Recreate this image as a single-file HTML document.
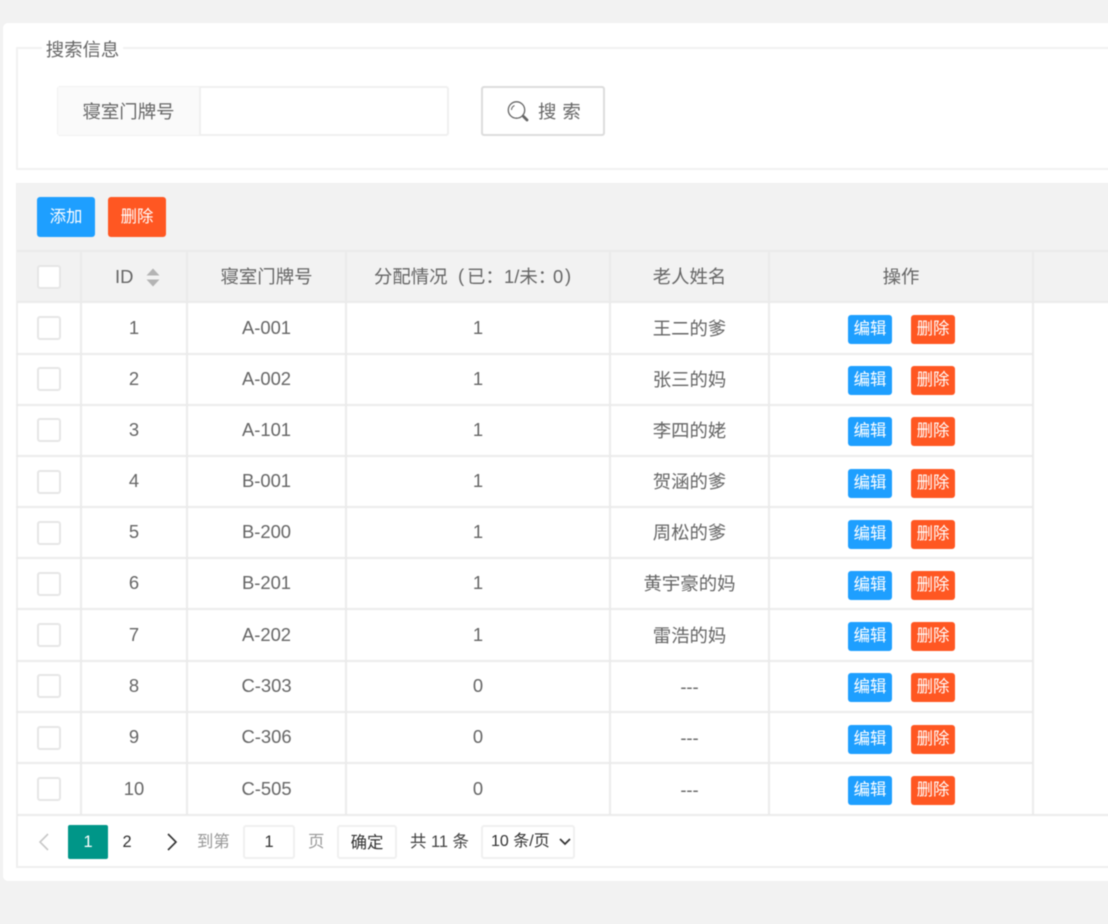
<!DOCTYPE html>
<html lang="zh"><head><meta charset="utf-8"><title>寝室管理</title>
<style>
*{box-sizing:border-box}
html,body{margin:0;padding:0}
body{width:1108px;height:924px;overflow:hidden;background:#f2f2f2;position:relative;font-family:"Liberation Sans","Noto Sans CJK SC",sans-serif;color:#666;font-size:18.4px}
div,span,a{position:absolute}
#wrap{left:0;top:0;width:1108px;height:924px;filter:blur(.5px)}
.t{white-space:nowrap;text-align:center;line-height:1}
.line{background:#ebebeb}
.cb{left:37px;width:24px;height:24px;background:#fff;border:2px solid #e6e6e6;border-radius:3px}
.btn{color:#fff;text-align:center;border-radius:3px;white-space:nowrap}
.b{background:#1e9fff}.r{background:#ff5722}
.main{width:58px;height:40px;top:197px;line-height:40px;font-size:16.4px}
.sm{width:44px;height:29px;line-height:29px;font-size:16.4px}
.row{left:16px;width:1092px;height:51px}
.c1{left:65px;width:106px}.c2{left:171px;width:159px}.c3{left:330px;width:264px}.c4{left:594px;width:159px;margin-top:1px}
.row .t{top:15.5px;height:20px;line-height:20px;font-size:18.4px}
.row .line.h{left:0;top:51px;width:1017px;height:2px}
.p{top:825px;height:34px;line-height:34px;font-size:16.4px;text-align:center;white-space:nowrap}
.box{background:#fff;border:2px solid #f0f0f0;border-radius:3px}
.h1{top:267px;height:20px;line-height:20px;white-space:nowrap}
</style></head>
<body><div id="wrap">
<div style="left:3px;top:23px;width:1110px;height:858px;background:#fff;border-radius:5px"></div>

<div style="left:16px;top:47px;width:1100px;height:123px;border:2px solid #f2f2f2"></div>
<div class="t" style="left:42px;top:40px;width:81px;height:20px;background:#fff;line-height:20px;font-size:18.4px;color:#666">搜索信息</div>

<div style="left:57px;top:86px;width:392px;height:50px;border:2px solid #f0f0f0;border-radius:3px;background:#fff"></div>
<div class="t" style="left:58px;top:87px;width:143px;height:48px;background:#fafafa;border-right:2px solid #f0f0f0;line-height:49px;font-size:18.4px;color:#666">寝室门牌号</div>

<div style="left:481px;top:86px;width:124px;height:50px;border:2px solid #dcdcdc;border-radius:3px;background:#fff"></div>
<svg style="position:absolute;left:505px;top:99px" width="26" height="26" viewBox="0 0 26 26" fill="none" stroke="#666"><circle cx="11.5" cy="11" r="8.2" stroke-width="1.3"/><path d="M6.5 11a5 5 0 0 1 3-4.5" stroke-width="1"/><path d="M18.5 17.5l3.5 3.5" stroke-width="2.8" stroke-linecap="round"/></svg>
<div class="t" style="left:538px;top:102px;height:20px;line-height:20px;font-size:18.4px;color:#666;letter-spacing:6px">搜索</div>

<div style="left:16px;top:183px;width:1100px;height:685px;border:2px solid #efefef"></div>
<div style="left:17px;top:184px;width:1100px;height:67px;background:#f2f2f2"></div>
<div class="btn b main" style="left:37px">添加</div>
<div class="btn r main" style="left:108px">删除</div>

<div style="left:17px;top:250px;width:1100px;height:53px;background:#f2f2f2;border-top:2px solid #ebebeb;border-bottom:2px solid #ebebeb"></div>
<div class="cb" style="top:265px"></div>
<div class="t" style="left:115px;top:267px;height:20px;line-height:20px">ID</div>
<svg style="position:absolute;left:146px;top:268px" width="14" height="19" viewBox="0 0 14 19" fill="#b4b4b4"><path d="M7 0.5L13.5 7.5H0.5z"/><path d="M7 18.5L0.5 11.5H13.5z"/></svg>
<div class="t" style="left:187px;width:159px;top:267px;height:20px;line-height:20px">寝室门牌号</div>
<div class="h1" style="left:374px">分配情况</div>
<div class="h1" style="left:458px;top:266px">(</div>
<div class="h1" style="left:467px">已：</div>
<div class="h1" style="left:504px">1/未：</div>
<div class="h1" style="left:553px">0</div>
<div class="h1" style="left:565px;top:266px">)</div>
<div class="t" style="left:610px;width:159px;top:267px;height:20px;line-height:20px">老人姓名</div>
<div class="t" style="left:769px;width:264px;top:267px;height:20px;line-height:20px">操作</div>

<div class="line" style="left:80px;top:251px;width:2px;height:564px"></div>
<div class="line" style="left:186px;top:251px;width:2px;height:564px"></div>
<div class="line" style="left:345px;top:251px;width:2px;height:564px"></div>
<div class="line" style="left:609px;top:251px;width:2px;height:564px"></div>
<div class="line" style="left:768px;top:251px;width:2px;height:564px"></div>
<div class="line" style="left:1032px;top:251px;width:2px;height:564px"></div>

<div class="row" style="top:302px"><div class="t c1">1</div><div class="t c2">A-001</div><div class="t c3">1</div><div class="t c4">王二的爹</div><div class="line h"></div></div>
<div class="row" style="top:353px"><div class="t c1">2</div><div class="t c2">A-002</div><div class="t c3">1</div><div class="t c4">张三的妈</div><div class="line h"></div></div>
<div class="row" style="top:404px"><div class="t c1">3</div><div class="t c2">A-101</div><div class="t c3">1</div><div class="t c4">李四的姥</div><div class="line h"></div></div>
<div class="row" style="top:455px"><div class="t c1">4</div><div class="t c2">B-001</div><div class="t c3">1</div><div class="t c4">贺涵的爹</div><div class="line h"></div></div>
<div class="row" style="top:506px"><div class="t c1" style="top:16px">5</div><div class="t c2" style="top:16px">B-200</div><div class="t c3" style="top:16px">1</div><div class="t c4" style="top:16px">周松的爹</div><div class="line h"></div></div>
<div class="row" style="top:557px"><div class="t c1" style="top:16px">6</div><div class="t c2" style="top:16px">B-201</div><div class="t c3" style="top:16px">1</div><div class="t c4" style="top:16px">黄宇豪的妈</div><div class="line h"></div></div>
<div class="row" style="top:609px"><div class="t c1">7</div><div class="t c2">A-202</div><div class="t c3">1</div><div class="t c4">雷浩的妈</div><div class="line h"></div></div>
<div class="row" style="top:660px"><div class="t c1">8</div><div class="t c2">C-303</div><div class="t c3">0</div><div class="t c4">---</div><div class="line h"></div></div>
<div class="row" style="top:711px"><div class="t c1" style="top:16px">9</div><div class="t c2" style="top:16px">C-306</div><div class="t c3" style="top:16px">0</div><div class="t c4" style="top:16px">---</div><div class="line h"></div></div>
<div class="row" style="top:763px"><div class="t c1">10</div><div class="t c2">C-505</div><div class="t c3">0</div><div class="t c4">---</div></div>
<div class="line" style="left:17px;top:814px;width:1100px;height:2px"></div>

<div class="cb" style="top:316px"></div><div class="btn b sm" style="left:848px;top:315px">编辑</div><div class="btn r sm" style="left:911px;top:315px">删除</div>
<div class="cb" style="top:367px"></div><div class="btn b sm" style="left:848px;top:366px">编辑</div><div class="btn r sm" style="left:911px;top:366px">删除</div>
<div class="cb" style="top:418px"></div><div class="btn b sm" style="left:848px;top:417px">编辑</div><div class="btn r sm" style="left:911px;top:417px">删除</div>
<div class="cb" style="top:470px"></div><div class="btn b sm" style="left:848px;top:469px">编辑</div><div class="btn r sm" style="left:911px;top:469px">删除</div>
<div class="cb" style="top:521px"></div><div class="btn b sm" style="left:848px;top:520px">编辑</div><div class="btn r sm" style="left:911px;top:520px">删除</div>
<div class="cb" style="top:572px"></div><div class="btn b sm" style="left:848px;top:571px">编辑</div><div class="btn r sm" style="left:911px;top:571px">删除</div>
<div class="cb" style="top:623px"></div><div class="btn b sm" style="left:848px;top:622px">编辑</div><div class="btn r sm" style="left:911px;top:622px">删除</div>
<div class="cb" style="top:674px"></div><div class="btn b sm" style="left:848px;top:673px">编辑</div><div class="btn r sm" style="left:911px;top:673px">删除</div>
<div class="cb" style="top:726px"></div><div class="btn b sm" style="left:848px;top:725px">编辑</div><div class="btn r sm" style="left:911px;top:725px">删除</div>
<div class="cb" style="top:777px"></div><div class="btn b sm" style="left:848px;top:776px">编辑</div><div class="btn r sm" style="left:911px;top:776px">删除</div>

<svg style="position:absolute;left:36px;top:832px" width="16" height="20" viewBox="0 0 16 20" fill="none" stroke="#c8c8c8" stroke-width="1.6"><path d="M12 2L4 10l8 8"/></svg>
<div class="p" style="left:68px;width:40px;background:#009688;color:#fff;border-radius:2px">1</div>
<div class="p" style="left:112px;width:30px;color:#333">2</div>
<svg style="position:absolute;left:164px;top:832px" width="16" height="20" viewBox="0 0 16 20" fill="none" stroke="#333" stroke-width="1.6"><path d="M4 2l8 8-8 8"/></svg>
<div class="p" style="left:197px;color:#999">到第</div>
<div class="p box" style="left:243px;width:52px;color:#333;line-height:30px">1</div>
<div class="p" style="left:308px;color:#999">页</div>
<div class="p box" style="left:337px;width:60px;color:#333;line-height:32px">确定</div>
<div class="p" style="left:410px;color:#444">共 11 条</div>
<div class="p box" style="left:481px;width:94px;color:#333;text-align:left;padding-left:8px;line-height:30px;font-size:16px">10 条/页</div>
<svg style="position:absolute;left:558px;top:837px" width="14" height="10" viewBox="0 0 14 10" fill="none" stroke="#333" stroke-width="1.7"><path d="M2 2l5 5 5-5"/></svg>
</div></body></html>
